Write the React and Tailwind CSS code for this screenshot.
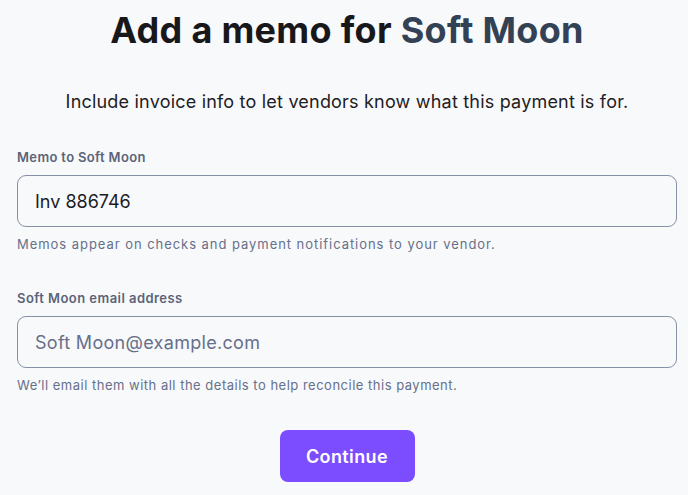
export default function App() {
  const font = { fontFamily: "Inter, 'Noto Sans', sans-serif" };
  return (
    <div className="min-h-[495px] bg-[#f8f9fb] overflow-hidden" style={font}>
      <div className="ml-[17px] w-[660px] flex flex-col">
        <h1 className="mt-[9px] h-[42px] text-center text-[36px] leading-[42px] font-bold text-[#18181b] tracking-[0.3px]">
          Add a memo for <span className="text-[#334155]">Soft Moon</span>
        </h1>
        <p className="mt-[39px] text-center text-[18px] leading-[24px] text-[#1f2023] tracking-[0.2px]">
          Include invoice info to let vendors know what this payment is for.
        </p>
        <label className="mt-[34px] text-[13px] leading-[18px] font-semibold text-[#5b6478] tracking-[0.35px]">
          Memo to Soft Moon
        </label>
        <div className="mt-[9px] h-[52px] rounded-[9px] border border-[#8791a5] flex items-center px-[17px] text-[18px] text-[#1b1c1f]">
          Inv 886746
        </div>
        <p className="mt-[8px] text-[13px] leading-[18px] text-[#66708a] tracking-[0.95px]">
          Memos appear on checks and payment notifications to your vendor.
        </p>
        <label className="mt-[36px] text-[13px] leading-[18px] font-semibold text-[#5b6478] tracking-[0.45px]">
          Soft Moon email address
        </label>
        <div className="mt-[9px] h-[52px] rounded-[9px] border border-[#8791a5] flex items-center px-[17px] text-[18px] text-[#66708a] tracking-[0.3px]">
          Soft Moon@example.com
        </div>
        <p className="mt-[8px] text-[13px] leading-[18px] text-[#66708a] tracking-[0.5px]">
          We’ll email them with all the details to help reconcile this payment.
        </p>
        <div className="mt-[36px] flex justify-center">
          <button className="w-[135px] h-[52px] rounded-[8px] bg-[#7c4dff] text-white text-[18px] font-semibold tracking-[0.4px]">
            Continue
          </button>
        </div>
      </div>
    </div>
  );
}
